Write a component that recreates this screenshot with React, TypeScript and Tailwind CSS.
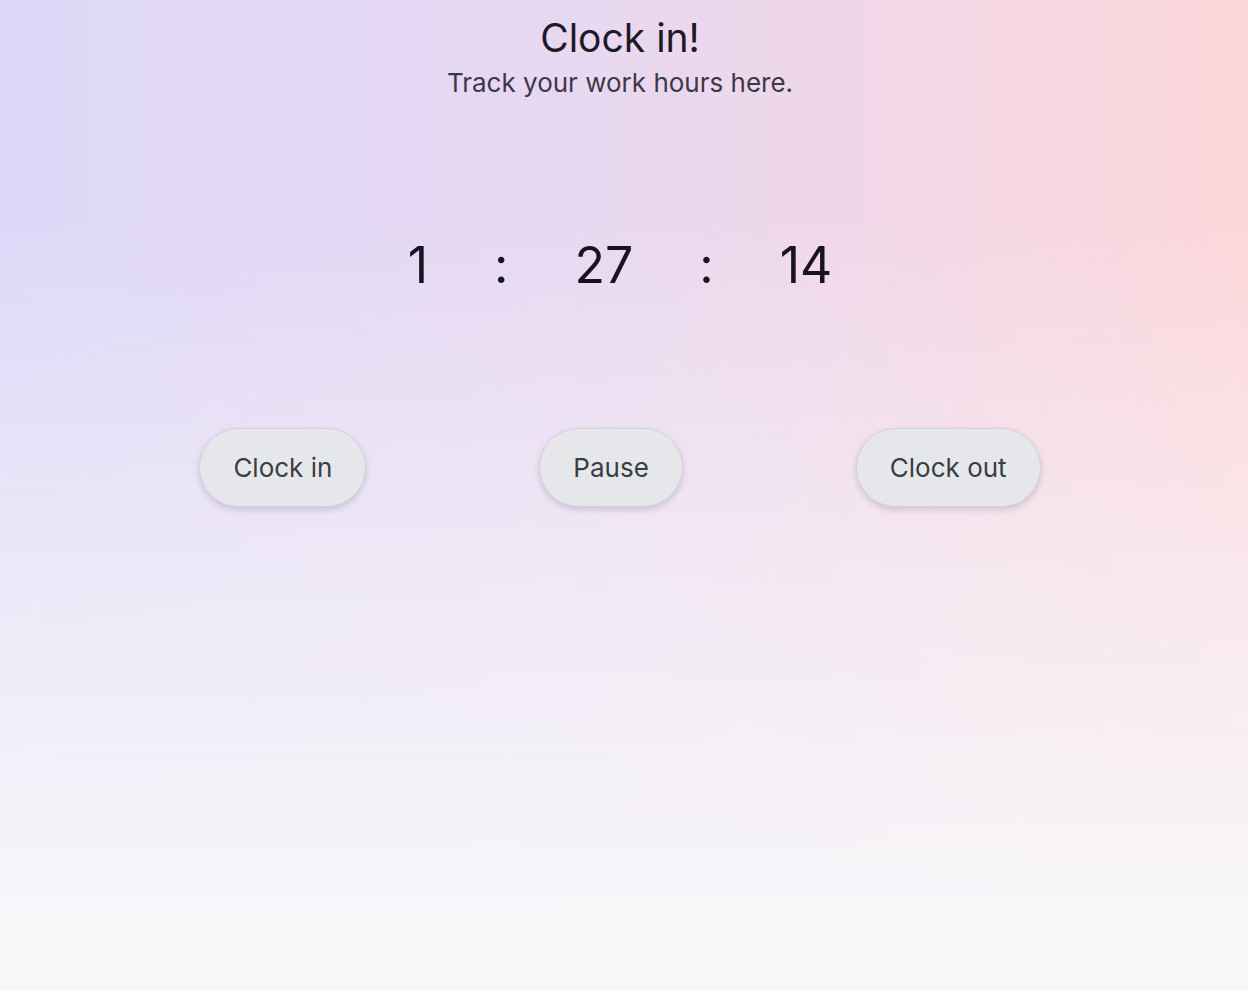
import React from "react";

function Btn({ label }: { label: string }) {
  return (
    <button className="h-[79px] px-[33px] rounded-full bg-[#e6e7ea] border border-[#d6d3dc] shadow-[0_3px_6px_rgba(60,40,80,0.18)] text-[26px] leading-[32px] text-[#3b3d45]">
      {label}
    </button>
  );
}

export default function App() {
  return (
    <div
      className="w-full h-[990px] bg-[linear-gradient(to_bottom,rgba(247,246,249,0)_22%,rgba(247,246,249,0.55)_58%,rgba(247,246,249,1)_92%),linear-gradient(to_right,#ddd8f8_0%,#e7d8f2_45%,#fdd6da_100%)]"
      style={{ fontFamily: "Inter, 'Noto Sans', sans-serif" }}
    >
      <div className="w-[1240px] flex flex-col items-center">
        <h1 className="mt-[14px] text-[39px] leading-[48px] font-normal text-[#1d1a28]">Clock in!</h1>
        <p className="mt-[5px] text-[26px] leading-[32px] text-[#3d3848]">Track your work hours here.</p>
        <div className="mt-[133px] flex items-center gap-[66px] text-[50px] leading-[66px] text-[#17141f]">
          <span>1</span>
          <span>:</span>
          <span>27</span>
          <span>:</span>
          <span>14</span>
        </div>
        <div className="mt-[130px] flex items-center gap-[173px]">
          <Btn label="Clock in" />
          <Btn label="Pause" />
          <Btn label="Clock out" />
        </div>
      </div>
    </div>
  );
}
